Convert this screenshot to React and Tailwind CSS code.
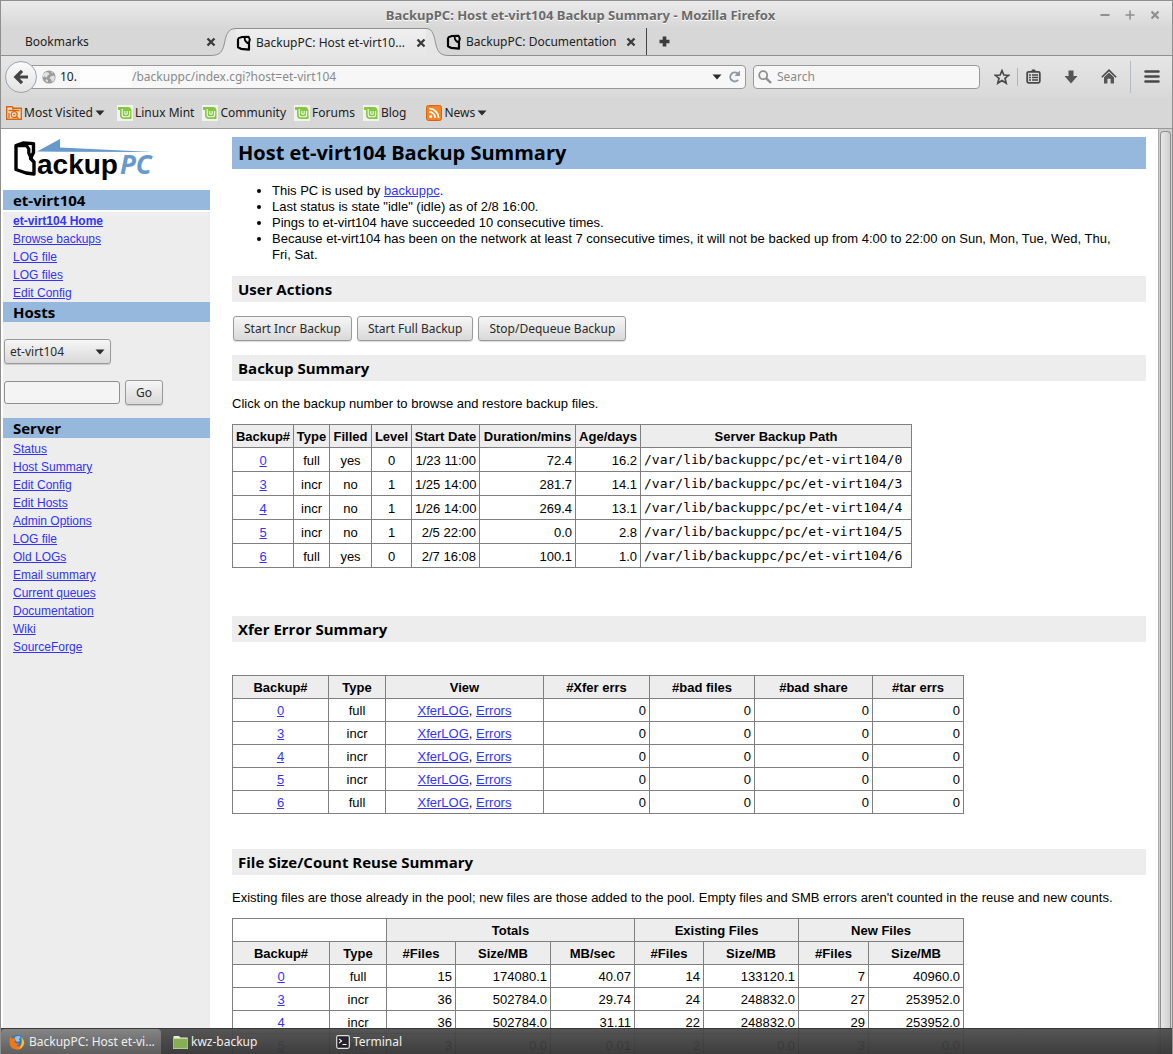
import React from "react";

const UI = "font-['Noto_Sans',sans-serif]";

function TabFavicon() {
  return (
    <svg width="16" height="16" viewBox="0 0 16 16" className="shrink-0" fill="none" stroke="#000" strokeLinejoin="round">
      <path d="M2 3.4 V12.2 L5 13.8 L13 14.6 V8.6 L10.4 7.2" strokeWidth="2.2" />
      <path d="M2 3.4 L6 2 L12.6 1.8 L13.8 4.4 L12.8 8.4" strokeWidth="2" />
      <path d="M8.6 2.4 L9 5.4 L10.6 7.4" strokeWidth="1.8" />
    </svg>
  );
}

function CloseX() {
  return (
    <svg width="10" height="10" viewBox="0 0 10 10" stroke="#3c3c3c" strokeWidth="2.4">
      <path d="M1.5 1.5 L8.5 8.5 M8.5 1.5 L1.5 8.5" />
    </svg>
  );
}

function Caret() {
  return (
    <svg width="10" height="6" viewBox="0 0 10 6" className="shrink-0">
      <path d="M0.5 0.5 H9.5 L5 5.5 Z" fill="#2b2b2b" />
    </svg>
  );
}

function MintIcon() {
  return (
    <svg width="16" height="16" viewBox="0 0 16 16" className="shrink-0">
      <rect width="16" height="16" fill="#f1f3ee" />
      <path d="M1 2 H11 Q14.5 2 14.5 6 V14 H7 Q3 14 3 10 V5 H1 Z" fill="#85c743" />
      <path d="M5.2 4 V9.5 Q5.2 11.8 7.2 11.8 H10.6 Q12.6 11.8 12.6 9.5 V6 M7.8 6 V9.2 M10.2 6 V9.2 M7.8 9.2 H10.2" fill="none" stroke="#f4f9ee" strokeWidth="1.1" />
    </svg>
  );
}

function MostVisitedIcon() {
  return (
    <svg width="16" height="16" viewBox="0 0 16 16" className="shrink-0">
      <path d="M0.7 1.7 H6 L7.5 3.2 H15.3 V14.3 H0.7 Z" fill="#fbe3cd" stroke="#d7660f" strokeWidth="1.4" />
      <path d="M2.5 5.5 H13.5 M7 2 V5" stroke="#d7660f" strokeWidth="1.3" />
      <circle cx="8.2" cy="9.6" r="3" fill="none" stroke="#d7660f" strokeWidth="1.2" />
      <circle cx="8.2" cy="9.6" r="1" fill="#d7660f" />
      <path d="M10.3 11.6 L12.5 13.6 M3 8 V13" stroke="#d7660f" strokeWidth="1.3" />
    </svg>
  );
}

function RssIcon() {
  return (
    <svg width="16" height="16" viewBox="0 0 16 16" className="shrink-0">
      <rect x="0.5" y="0.5" width="15" height="15" rx="2" fill="#f78422" stroke="#d9640c" />
      <circle cx="4.6" cy="11.6" r="1.5" fill="#fff" />
      <path d="M3.2 6.9 A6 6 0 0 1 9.2 12.9 M3.2 3.6 A9.3 9.3 0 0 1 12.6 12.9" fill="none" stroke="#fff" strokeWidth="1.7" />
    </svg>
  );
}

function Globe() {
  return (
    <svg width="14" height="14" viewBox="0 0 14 14" className="shrink-0">
      <circle cx="7" cy="7" r="6.6" fill="#9b9b9b" />
      <path d="M1.2 4 L4 2 L6.5 2.6 L7.5 4.4 L5.5 5.5 L5 7.5 L2.6 6.6 L1 7.2 Z M8.5 6.5 L11.5 5.6 L13 7 L12 10.6 L9.8 12 L9.3 9.4 L7.6 8.4 Z M8.8 1.4 L11 2.4 L10 3.6 Z M4 9 L6 10.2 L5.6 12.6 L3.4 10.8 Z" fill="#e2e2e2" />
    </svg>
  );
}

function BackupLogo() {
  return (
    <svg width="144" height="42" viewBox="0 0 144 42" role="img" aria-label="BackupPC">
      <path d="M25 12.5 L48 0 V8.5 L141 13 L48 12.8 Z" fill="#6699cc" />
      <path d="M4 6.6 L11 4 L21.5 4.6 V13.5 L18.5 19.5 L22 23 V35 L14 34 L4 30.5 Z" fill="#fff" stroke="#000" strokeWidth="3.4" strokeLinejoin="round" />
      <path d="M4 6.6 L14.5 6.4 L16.8 10 V14 L19.5 20" fill="none" stroke="#000" strokeWidth="3.2" strokeLinejoin="round" />
      <text x="25" y="35" fontFamily="Liberation Sans, sans-serif" fontWeight="bold" fontSize="28" fill="#000">ackup</text>
      <text x="108" y="35" fontFamily="Open Sans, sans-serif" fontWeight="bold" fontStyle="italic" fontSize="26" fill="#6699cc">PC</text>
    </svg>
  );
}

function Link({ children, bold }) {
  return (
    <a href="#" className={bold ? "text-[#3333ff] underline font-bold" : "text-[#3333ff] underline"}>
      {children}
    </a>
  );
}

function SideHead({ children }) {
  return (
    <h2 className="h-5 bg-[#95b8dc] pl-2.5 font-['Open_Sans',sans-serif] text-[15px] leading-5 font-bold text-black">
      {children}
    </h2>
  );
}

function SideLinks({ items }) {
  return (
    <ul className="pl-2.5 text-xs leading-[18px]">
      {items.map((t, i) => (
        <li key={t + i}>
          <Link bold={t.endsWith("Home")}>{t}</Link>
        </li>
      ))}
    </ul>
  );
}

function SectionHead({ children }) {
  return (
    <h2 className="h-[26px] bg-[#ededed] pl-1.5 font-['Open_Sans',sans-serif] text-[15px] leading-[26px] font-bold text-black">
      {children}
    </h2>
  );
}

const BTN =
  "rounded-[3px] border border-[#9a9a9a] bg-linear-to-b from-[#f6f6f6] to-[#d9d9d9] font-['Noto_Sans',sans-serif] text-xs text-[#2b2b2b] shadow-[0_1px_1px_rgba(0,0,0,0.15)]";
const CELL = "border border-[#7f7f7f] px-[3px] pt-0.5 pb-0";
const HEAD = "border border-[#7f7f7f] bg-[#ededed] px-0 pt-0.5 pb-0 text-center font-bold";

const summary = [
  ["0", "full", "yes", "0", "1/23 11:00", "72.4", "16.2"],
  ["3", "incr", "no", "1", "1/25 14:00", "281.7", "14.1"],
  ["4", "incr", "no", "1", "1/26 14:00", "269.4", "13.1"],
  ["5", "incr", "no", "1", "2/5 22:00", "0.0", "2.8"],
  ["6", "full", "yes", "0", "2/7 16:08", "100.1", "1.0"],
];
const summaryCols = ["w-[61px]", "w-[36px]", "w-[42px]", "w-[40px]", "w-[68px]", "w-[96px]", "w-[65px]", "w-[271px]"];
const xferCols = ["w-[96px]", "w-[57px]", "w-[158px]", "w-[106px]", "w-[105px]", "w-[118px]", "w-[91px]"];
const reuseCols = ["w-[97px]", "w-[57px]", "w-[69px]", "w-[95px]", "w-[84px]", "w-[69px]", "w-[95px]", "w-[70px]", "w-[95px]"];
const reuse = [
  ["0", "full", "15", "174080.1", "40.07", "14", "133120.1", "7", "40960.0"],
  ["3", "incr", "36", "502784.0", "29.74", "24", "248832.0", "27", "253952.0"],
  ["4", "incr", "36", "502784.0", "31.11", "22", "248832.0", "29", "253952.0"],
  ["5", "incr", "3", "0.0", "0.01", "2", "0.0", "3", "0.0"],
];

function Cols({ widths }) {
  return (
    <colgroup>
      {widths.map((w, i) => (
        <col key={i} className={w} />
      ))}
    </colgroup>
  );
}

function TitleBar() {
  return (
    <header className="flex h-[27px] shrink-0 items-center bg-linear-to-b from-[#ebebeb] to-[#d7d7d7] pr-3">
      <div className="w-16" />
      <h1 className="flex-1 text-center text-[13px] leading-7 font-bold text-[#6a6a6a] [text-shadow:0_1px_0_#fff]">
        BackupPC: Host et-virt104 Backup Summary - Mozilla Firefox
      </h1>
      <div className="flex w-16 items-center justify-end gap-[15px]">
        <button aria-label="Minimize">
          <svg width="10" height="10" stroke="#8f8f8f" strokeWidth="2"><path d="M0.5 5 H9.5" /></svg>
        </button>
        <button aria-label="Maximize">
          <svg width="10" height="10" stroke="#8f8f8f" strokeWidth="1.6"><path d="M0.5 5 H9.5 M5 0.5 V9.5" /></svg>
        </button>
        <button aria-label="Close">
          <svg width="10" height="10" stroke="#8f8f8f" strokeWidth="2.2"><path d="M1.5 1.5 L8.5 8.5 M8.5 1.5 L1.5 8.5" /></svg>
        </button>
      </div>
    </header>
  );
}

function TabStrip() {
  return (
    <nav className="flex h-7 shrink-0 bg-[#d7d7d7] text-xs text-[#222]">
      <div className="flex w-[209px] shrink-0 items-center justify-between border-b border-[#8f8f8f] pr-0 pl-6">
        <span>Bookmarks</span>
        <button className="-mr-1.5" aria-label="Close tab"><CloseX /></button>
      </div>
      <div className="flex w-[239px] shrink-0">
        <svg width="26" height="28" viewBox="0 0 26 28" className="shrink-0">
          <path d="M0 27.5 C10 27.5 12 24 14 17 C16 8 17 0.5 26 0.5 V28 H0 Z" fill="#e6e6e6" />
          <path d="M0 27.5 C10 27.5 12 24 14 17 C16 8 17 0.5 26 0.5" fill="none" stroke="#8f8f8f" />
        </svg>
        <div className="flex flex-1 items-center border-t border-[#8f8f8f] bg-linear-to-b from-[#efefef] to-[#e6e6e6]">
          <TabFavicon />
          <span className="ml-1 flex-1 whitespace-nowrap">BackupPC: Host et-virt10...</span>
          <button aria-label="Close tab"><CloseX /></button>
        </div>
        <svg width="23" height="28" viewBox="0 0 23 28" className="shrink-0">
          <path d="M0 0.5 C7 0.5 8 8 10 17 C12 24 14 27.5 23 27.5 V28 H0 Z" fill="#e6e6e6" />
          <path d="M0 0.5 C7 0.5 8 8 10 17 C12 24 14 27.5 23 27.5" fill="none" stroke="#8f8f8f" />
        </svg>
      </div>
      <div className="flex flex-1 items-center border-b border-[#8f8f8f]">
        <div className="-ml-[3px] flex h-full items-center border-r border-[#444] pr-2.5">
          <TabFavicon />
          <span className="mr-2.5 ml-1 whitespace-nowrap">BackupPC: Documentation</span>
          <button aria-label="Close tab"><CloseX /></button>
        </div>
        <button className="ml-3" aria-label="New tab">
          <svg width="11" height="11" stroke="#3c3c3c" strokeWidth="3.6"><path d="M0.5 5.5 H10.5 M5.5 0.5 V10.5" /></svg>
        </button>
      </div>
    </nav>
  );
}

function NavBar() {
  return (
    <div className="flex h-[41px] shrink-0 items-center bg-linear-to-b from-[#e6e6e6] to-[#d9d9d9] pr-3 pl-1">
      <button aria-label="Back" className="z-10 flex h-8 w-8 shrink-0 items-center justify-center rounded-full border border-[#9aa4ae] bg-linear-to-b from-[#fafafa] to-[#e3e3e3]">
        <svg width="16" height="16" viewBox="0 0 16 16" fill="none" stroke="#444" strokeWidth="3.2"><path d="M15 8 H3 M9 1.8 L2.8 8 L9 14.2" /></svg>
      </button>
      <div className="-ml-2 flex h-6 flex-1 items-center rounded-r-sm border border-[#999] bg-[#f7f7f7] pr-1 pl-3 text-xs">
        <Globe />
        <input aria-label="Host" defaultValue="10." className="ml-1 w-5 bg-transparent text-[#222] outline-none" />
        <span className="h-5 w-[52px] bg-[#fdfdfd]" />
        <input aria-label="Address" defaultValue="/backuppc/index.cgi?host=et-virt104" className="min-w-0 flex-1 bg-transparent text-[#8a8a8a] outline-none" />
        <button aria-label="History" className="mr-1.5"><Caret /></button>
        <button aria-label="Reload">
          <svg width="13" height="13" viewBox="0 0 13 13" fill="none"><path d="M10.2 9.8 A4.5 4.5 0 1 1 9.6 3.4" stroke="#8f9aa5" strokeWidth="2" /><path d="M12 0.5 V6 H6.5 Z" fill="#8f9aa5" /></svg>
        </button>
      </div>
      <label className="ml-[7px] flex h-6 w-[227px] items-center rounded-sm border border-[#999] bg-[#f7f7f7] pl-1 text-xs">
        <svg width="14" height="14" viewBox="0 0 14 14" fill="none" stroke="#8f8f8f"><circle cx="5.2" cy="5.2" r="4" strokeWidth="1.8" /><path d="M8.3 8.3 L13 13" strokeWidth="2.4" /></svg>
        <input aria-label="Search" placeholder="Search" className="ml-[5px] min-w-0 flex-1 bg-transparent outline-none placeholder:text-[#8a8a8a]" />
      </label>
      <div className="ml-3.5 flex items-center">
        <button aria-label="Bookmark this page">
          <svg width="16" height="16" viewBox="0 0 16 16" fill="none" stroke="#484848" strokeWidth="1.7"><path d="M8 1.6 L9.9 6 L14.7 6.3 L11 9.4 L12.2 14.2 L8 11.6 L3.8 14.2 L5 9.4 L1.3 6.3 L6.1 6 Z" /></svg>
        </button>
        <span className="mr-2 ml-[7px] h-[18px] w-px bg-[#a9b4c0]" />
        <button aria-label="Bookmarks menu">
          <svg width="15" height="15" viewBox="0 0 15 15"><path d="M5 2.5 L6 0.5 H9 L10 2.5 Z" fill="#484848" /><rect x="1.2" y="2.8" width="12.6" height="11" rx="1.5" fill="none" stroke="#484848" strokeWidth="1.8" /><path d="M3 6 H5 M6 6 H12 M3 8.5 H5 M6 8.5 H12 M3 11 H5 M6 11 H12" stroke="#484848" strokeWidth="1.4" /></svg>
        </button>
        <button aria-label="Downloads" className="ml-[23px]">
          <svg width="14" height="14" viewBox="0 0 14 14"><path d="M4.5 0.5 H9.5 V6 H13.5 L7 13.5 L0.5 6 H4.5 Z" fill="#565656" /></svg>
        </button>
        <button aria-label="Home" className="ml-[23px]">
          <svg width="16" height="15" viewBox="0 0 16 15"><path d="M0.8 8.2 L8 1.2 L15.2 8.2" fill="none" stroke="#484848" strokeWidth="1.6" /><path d="M3 8.2 L8 3.6 L13 8.2 V14.5 H9.6 V9.8 H6.4 V14.5 H3 Z" fill="#565656" /></svg>
        </button>
        <span className="mx-[13px] h-8 w-px bg-[#b2bcc6]" />
        <button aria-label="Menu">
          <svg width="16" height="13" viewBox="0 0 16 13" stroke="#484848" strokeWidth="2.6" strokeLinecap="round"><path d="M1.5 1.5 H14.5 M1.5 6.5 H14.5 M1.5 11.5 H14.5" /></svg>
        </button>
      </div>
    </div>
  );
}

function BookmarksBar() {
  return (
    <div className="flex h-8 shrink-0 items-center border-b border-[#999] bg-[#d7d7d7] pl-[5px] text-xs text-[#222]">
      <button className="flex items-center gap-0.5 pr-3"><MostVisitedIcon />Most Visited<Caret /></button>
      {["Linux Mint", "Community", "Forums", "Blog"].map((t) => (
        <button key={t} className="mr-2 flex items-center gap-0.5"><MintIcon />{t}</button>
      ))}
      <button className="ml-3 flex items-center gap-0.5"><RssIcon />News<Caret /></button>
    </div>
  );
}

function Sidebar() {
  return (
    <aside className="ml-0.5 w-[207px] shrink-0 bg-[#ededed]">
      <div className="h-[61px] bg-white pt-2.5 pl-[9px]"><BackupLogo /></div>
      <SideHead>et-virt104</SideHead>
      <div className="h-0.5 bg-white" />
      <SideLinks items={["et-virt104 Home", "Browse backups", "LOG file", "LOG files", "Edit Config"]} />
      <SideHead>Hosts</SideHead>
      <div className="relative mt-[17px] ml-px w-[107px]">
        <select aria-label="Host" className={BTN + " block h-[25px] w-full appearance-none pl-[5px]"}>
          <option>et-virt104</option>
        </select>
        <span className="pointer-events-none absolute inset-y-0 right-1.5 flex items-center"><Caret /></span>
      </div>
      <form className="mt-4 ml-px flex items-center gap-[5px]" onSubmit={(e) => e.preventDefault()}>
        <input aria-label="Host name" className="h-[23px] w-[116px] rounded-[3px] border border-[#8f8f8f] bg-[#f4f4f4] px-1 text-xs" />
        <button className={BTN + " h-[25px] w-[38px]"}>Go</button>
      </form>
      <div className="h-[13px]" />
      <SideHead>Server</SideHead>
      <div className="h-0.5" />
      <SideLinks items={["Status", "Host Summary", "Edit Config", "Edit Hosts", "Admin Options", "LOG file", "Old LOGs", "Email summary", "Current queues", "Documentation", "Wiki", "SourceForge"]} />
    </aside>
  );
}

function BackupTable() {
  return (
    <table className="mt-3 w-[680px] table-fixed border-collapse leading-5 whitespace-nowrap">
      <Cols widths={summaryCols} />
      <thead>
        <tr className="h-[23px]">
          {["Backup#", "Type", "Filled", "Level", "Start Date", "Duration/mins", "Age/days", "Server Backup Path"].map((h) => (
            <th key={h} className={HEAD}>{h}</th>
          ))}
        </tr>
      </thead>
      <tbody>
        {summary.map((r) => (
          <tr key={r[0]} className="h-6">
            {r.map((c, i) => (
              <td key={i} className={CELL + (i > 3 ? " text-right" : " text-center")}>{i === 0 ? <Link>{c}</Link> : c}</td>
            ))}
            <td className="border border-[#7f7f7f] px-[3px] py-0 font-['DejaVu_Sans_Mono',monospace]">/var/lib/backuppc/pc/et-virt104/{r[0]}</td>
          </tr>
        ))}
      </tbody>
    </table>
  );
}

function XferTable() {
  return (
    <table className="mt-[33px] w-[732px] table-fixed border-collapse leading-5">
      <Cols widths={xferCols} />
      <thead>
        <tr>
          {["Backup#", "Type", "View", "#Xfer errs", "#bad files", "#bad share", "#tar errs"].map((h) => (
            <th key={h} className={HEAD}>{h}</th>
          ))}
        </tr>
      </thead>
      <tbody>
        {summary.map((r) => (
          <tr key={r[0]}>
            <td className={CELL + " text-center"}><Link>{r[0]}</Link></td>
            <td className={CELL + " text-center"}>{r[1]}</td>
            <td className={CELL + " text-center"}><Link>XferLOG</Link>, <Link>Errors</Link></td>
            {[0, 1, 2, 3].map((i) => (
              <td key={i} className={CELL + " text-right"}>0</td>
            ))}
          </tr>
        ))}
      </tbody>
    </table>
  );
}

function ReuseTable() {
  return (
    <table className="mt-3 w-[732px] table-fixed border-collapse leading-5">
      <Cols widths={reuseCols} />
      <thead>
        <tr className="h-[23px]">
          <td colSpan={2} className={CELL}></td>
          <th colSpan={3} className={HEAD}>Totals</th>
          <th colSpan={2} className={HEAD}>Existing Files</th>
          <th colSpan={2} className={HEAD}>New Files</th>
        </tr>
        <tr>
          {["Backup#", "Type", "#Files", "Size/MB", "MB/sec", "#Files", "Size/MB", "#Files", "Size/MB"].map((h, i) => (
            <th key={i} className={HEAD}>{h}</th>
          ))}
        </tr>
      </thead>
      <tbody>
        {reuse.map((r) => (
          <tr key={r[0]}>
            {r.map((c, i) => (
              <td key={i} className={CELL + (i > 1 ? " text-right" : " text-center")}>{i === 0 ? <Link>{c}</Link> : c}</td>
            ))}
          </tr>
        ))}
      </tbody>
    </table>
  );
}

function Content() {
  return (
    <main className="ml-[22px] min-w-0 flex-1 pt-2 pr-3 text-[13px] leading-4">
      <h1 className="h-8 bg-[#95b8dc] pl-1.5 font-['Open_Sans',sans-serif] text-xl leading-8 font-bold">
        Host et-virt104 Backup Summary
      </h1>
      <ul className="mt-3.5 list-disc pr-4 pl-10">
        <li>This PC is used by <Link>backuppc</Link>.</li>
        <li>Last status is state "idle" (idle) as of 2/8 16:00.</li>
        <li>Pings to et-virt104 have succeeded 10 consecutive times.</li>
        <li>Because et-virt104 has been on the network at least 7 consecutive times, it will not be backed up from 4:00 to 22:00 on Sun, Mon, Tue, Wed, Thu, Fri, Sat.</li>
      </ul>
      <div className="h-[13px]" />
      <SectionHead>User Actions</SectionHead>
      <div className="mt-3.5 mb-3.5 ml-px flex gap-[5px]">
        {["Start Incr Backup", "Start Full Backup", "Stop/Dequeue Backup"].map((t) => (
          <button key={t} className={BTN + " h-[25px] px-2.5"}>{t}</button>
        ))}
      </div>
      <SectionHead>Backup Summary</SectionHead>
      <p className="mt-[15px]">Click on the backup number to browse and restore backup files.</p>
      <BackupTable />
      <div className="h-12" />
      <SectionHead>Xfer Error Summary</SectionHead>
      <XferTable />
      <div className="h-[35px]" />
      <SectionHead>File Size/Count Reuse Summary</SectionHead>
      <p className="mt-[15px]">Existing files are those already in the pool; new files are those added to the pool. Empty files and SMB errors aren't counted in the reuse and new counts.</p>
      <ReuseTable />
    </main>
  );
}

function Taskbar() {
  return (
    <footer className="absolute inset-x-0 bottom-0 flex h-[26px] border-t border-[#3a3a3a] bg-linear-to-b from-[#4d4d4d]/95 to-[#333]/95 text-xs text-[#eee]">
      <button className="flex w-[160px] items-center gap-1 rounded-t-sm bg-linear-to-b from-[#858585] to-[#5d5d5d] pl-2">
        <svg width="16" height="16" viewBox="0 0 16 16" className="shrink-0">
          <circle cx="8" cy="8" r="7" fill="#3475b6" />
          <path d="M6 3 Q9 1 12 3 L10 5 L11 7 L8 8 L6 6 Z" fill="#8ec3ea" />
          <path d="M1 3 L3 4.5 Q5 3.5 7 5 L5.5 7 Q6 9.5 8.5 9.5 L10.5 9 Q9.5 12 6.5 11 Q10 13.5 12.5 10.5 Q14 8 12.5 4 Q17 8 14.5 12 Q12 16 7 15.6 Q1 14.5 0.6 9 Q0.4 5 1 3 Z" fill="#ec7a1c" />
          <path d="M12.5 3 Q16 7 14.4 11 Q13 14 10 15 Q13.5 11 12.5 3 Z" fill="#f8c83a" />
        </svg>
        BackupPC: Host et-vi...
      </button>
      <button className="flex w-[163px] items-center gap-[3px] pl-3 text-left">
        <svg width="15" height="14" viewBox="0 0 15 14" className="shrink-0"><path d="M0.5 1 H6 L7.5 2.5 H14.5 V5 H0.5 Z" fill="#e8ecd8" /><rect x="0" y="3.5" width="15" height="10" fill="#86ae54" stroke="#c8dca6" strokeWidth="0.8" /></svg>
        kwz-backup
      </button>
      <button className="flex w-[163px] items-center gap-[3px] pl-3">
        <svg width="14" height="14" viewBox="0 0 14 14" className="shrink-0"><rect x="0.7" y="0.7" width="12.6" height="12.6" rx="1.5" fill="#24212b" stroke="#ddd" strokeWidth="1.2" /><path d="M3 3.8 L5.6 6 L3 8.2 M6.5 9.5 H10.5" fill="none" stroke="#fff" strokeWidth="1.1" /></svg>
        Terminal
      </button>
    </footer>
  );
}

export default function App() {
  return (
    <div className={"relative flex h-screen flex-col overflow-hidden border-t border-r border-l border-[#8f8f8f] bg-white " + UI}>
      <TitleBar />
      <TabStrip />
      <NavBar />
      <BookmarksBar />
      <div className="flex min-h-0 flex-1 overflow-hidden bg-white font-['Liberation_Sans',Arial,sans-serif] text-black">
        <Sidebar />
        <Content />
        <div className="w-3.5 shrink-0 border-l border-[#aaa] bg-[#cfcfcf] px-px pt-0.5">
          <div className="h-full rounded-t border-x border-t border-[#8f8f8f] bg-linear-to-r from-[#e8e8e8] to-[#cfcfcf]" />
        </div>
      </div>
      <Taskbar />
    </div>
  );
}
